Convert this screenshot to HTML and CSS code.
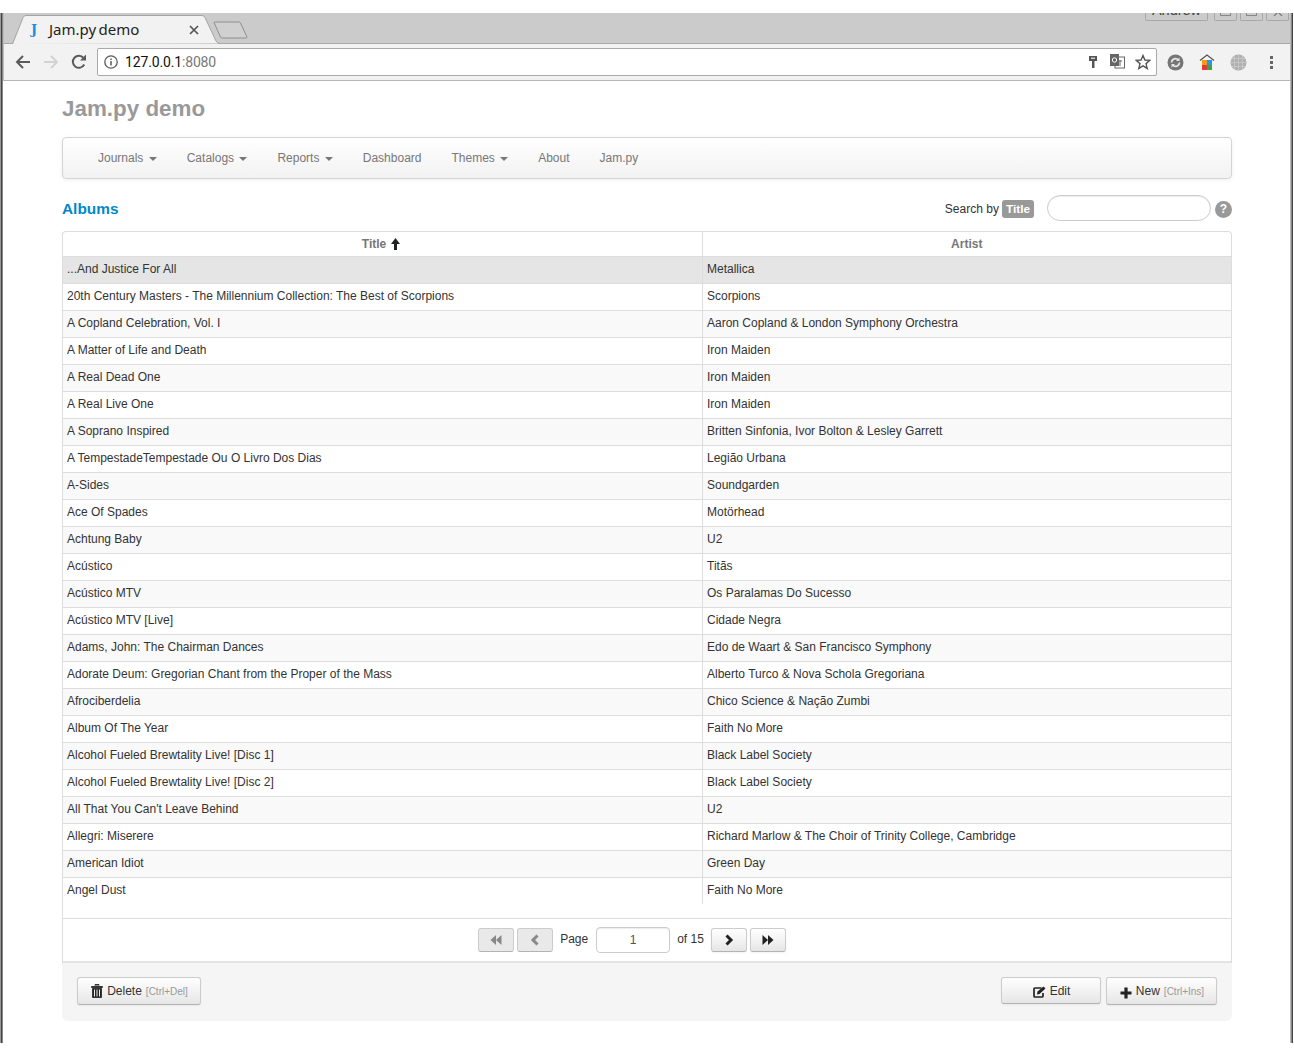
FILE: index.html
```html
<!DOCTYPE html>
<html>
<head>
	<meta charset="utf-8">
	<title>Jam.py demo</title>
	<link rel="stylesheet" href="styles.css">
</head>
<body>
<div class="window">
	<div class="tabstrip">
		<div class="tab">
			<svg class="tab-shape" width="208" height="29" viewBox="0 0 208 29"><path d="M0.5 29 L11 2.5 Q12 0.5 14 0.5 L190 0.5 Q192 0.5 193 2.5 L204 26 Q205 28 208 28.500" fill="#f2f2f2" stroke="#a3a3a3"/></svg>
			<span class="tab-logo">J</span>
			<span class="tab-title">Jam.py demo</span>
			<svg class="tab-close" width="10" height="10" viewBox="0 0 10 10"><path d="M1 1 L9 9 M9 1 L1 9" stroke="#555" stroke-width="1.700"/></svg>
		</div>
		<svg class="newtab" width="35" height="18" viewBox="0 0 35 18"><path d="M1 1.500 Q1 1 2 1 L26 1 Q27 1 27.500 2 L34 16 Q34 17 33 17 L9 17 Q8 17 7.500 16 Z" fill="#d0d0d0" stroke="#8f8f8f"/></svg>
		<div class="winbtns">
			<span class="winbtn user">Andrew</span>
			<span class="winbtn"><i class="win-min"></i></span>
			<span class="winbtn"><i class="win-max"></i></span>
			<span class="winbtn"><svg width="12" height="12" viewBox="0 0 12 12"><path d="M2 4 L10 12 M10 4 L2 12" stroke="#777" stroke-width="1.200"/></svg></span>
		</div>
	</div>
	<div class="toolbar">
		<svg class="tool" width="16" height="16" viewBox="0 0 16 16"><path d="M15 8 H2 M8 2 L2 8 L8 14" fill="none" stroke="#5a5a5a" stroke-width="2"/></svg>
		<svg class="tool" width="16" height="16" viewBox="0 0 16 16"><path d="M1 8 H14 M8 2 L14 8 L8 14" fill="none" stroke="#d2d2d2" stroke-width="2"/></svg>
		<svg class="tool" width="16" height="16" viewBox="0 0 16 16"><path d="M13.200 10.500 A6 6 0 1 1 12.500 4" fill="none" stroke="#5a5a5a" stroke-width="2"/><path d="M9 6.500 H15 V0.500 Z" fill="#5a5a5a"/></svg>
		<div class="urlbar">
			<svg class="info" width="14" height="14" viewBox="0 0 14 14"><circle cx="7" cy="7" r="6.200" fill="none" stroke="#5a5a5a" stroke-width="1.300"/><path d="M7 6 V10.500 M7 3.500 V5" stroke="#5a5a5a" stroke-width="1.500"/></svg>
			<span class="host">127.0.0.1</span><span class="port">:8080</span>
			<svg class="url-ico key" width="8" height="14" viewBox="0 0 8 14"><path d="M0 1 H8 V6 H5.500 V13 H3 V6 H0 Z" fill="#555"/><rect x="2" y="2.500" width="4" height="1.500" fill="#ccc"/></svg>
			<svg class="url-ico trans" width="15" height="15" viewBox="0 0 15 15"><rect x="5" y="3" width="9.500" height="11" fill="#fff" stroke="#666"/><rect x="0" y="0" width="9" height="12" fill="#666"/><circle cx="4.500" cy="6" r="2.200" fill="none" stroke="#fff"/><path d="M8 7 H12 M10 6 V12" stroke="#666"/></svg>
			<svg class="url-ico star" width="16" height="16" viewBox="0 0 16 16"><path d="M8 1.500 L9.900 6 L14.800 6.400 L11 9.600 L12.200 14.400 L8 11.800 L3.800 14.400 L5 9.600 L1.200 6.400 L6.100 6 Z" fill="none" stroke="#555" stroke-width="1.400"/></svg>
		</div>
		<svg class="ext" width="17" height="17" viewBox="0 0 17 17"><circle cx="8.500" cy="8.500" r="8" fill="#757575"/><path d="M4.500 8.500 A4 4 0 0 1 11.500 6 M12.500 8.500 A4 4 0 0 1 5.500 11" fill="none" stroke="#e6e6e6" stroke-width="1.600"/><path d="M12.500 3.500 V7 H9 Z M4.500 13.500 V10 H8 Z" fill="#e6e6e6"/></svg>
		<svg class="ext" width="16" height="17" viewBox="0 0 16 17"><path d="M1 6.500 L8 1 L15 6.500" fill="none" stroke="#555" stroke-width="1.300"/><rect x="3" y="6" width="5" height="5" fill="#f39c12"/><rect x="8" y="6" width="5" height="5" fill="#2196f3"/><rect x="3" y="11" width="5" height="5" fill="#e53935"/><rect x="8" y="11" width="5" height="5" fill="#43a047"/></svg>
		<svg class="ext" width="17" height="17" viewBox="0 0 17 17"><circle cx="8.500" cy="8.500" r="8" fill="#b0b0b0"/><path d="M0.500 8.500 H16.500 M2 4.500 H15 M2 12.500 H15 M8.500 0.500 V16.500 M4.500 2 V15 M12.500 2 V15" stroke="#c6c6c6"/></svg>
		<div class="dots"><i></i><i></i><i></i></div>
	</div>
	<div class="page">
		<div class="container">
			<h1 class="brand">Jam.py demo</h1>
			<ul class="navbar">
				<li>Journals <b class="caret"></b></li>
				<li>Catalogs <b class="caret"></b></li>
				<li>Reports <b class="caret"></b></li>
				<li>Dashboard</li>
				<li>Themes <b class="caret"></b></li>
				<li>About</li>
				<li>Jam.py</li>
			</ul>
			<div class="head-row">
				<h4 class="view-title">Albums</h4>
				<div class="search">
					<span class="search-by">Search by</span>
					<span class="label">Title</span>
					<input class="search-input" type="text">
					<span class="help">?</span>
				</div>
			</div>
			<div class="grid">
				<table>
					<thead>
						<tr>
							<th class="col-title">Title <svg class="sort" width="9" height="12" viewBox="0 0 9 12"><path d="M4.500 0 L9 6 H6 V12 H3 V6 H0 Z" fill="#222"/></svg></th>
							<th>Artist</th>
						</tr>
					</thead>
					<tbody>
						<tr class="selected"><td>...And Justice For All</td><td>Metallica</td></tr>
						<tr><td>20th Century Masters - The Millennium Collection: The Best of Scorpions</td><td>Scorpions</td></tr>
						<tr><td>A Copland Celebration, Vol. I</td><td>Aaron Copland &amp; London Symphony Orchestra</td></tr>
						<tr><td>A Matter of Life and Death</td><td>Iron Maiden</td></tr>
						<tr><td>A Real Dead One</td><td>Iron Maiden</td></tr>
						<tr><td>A Real Live One</td><td>Iron Maiden</td></tr>
						<tr><td>A Soprano Inspired</td><td>Britten Sinfonia, Ivor Bolton &amp; Lesley Garrett</td></tr>
						<tr><td>A TempestadeTempestade Ou O Livro Dos Dias</td><td>Legião Urbana</td></tr>
						<tr><td>A-Sides</td><td>Soundgarden</td></tr>
						<tr><td>Ace Of Spades</td><td>Motörhead</td></tr>
						<tr><td>Achtung Baby</td><td>U2</td></tr>
						<tr><td>Acústico</td><td>Titãs</td></tr>
						<tr><td>Acústico MTV</td><td>Os Paralamas Do Sucesso</td></tr>
						<tr><td>Acústico MTV [Live]</td><td>Cidade Negra</td></tr>
						<tr><td>Adams, John: The Chairman Dances</td><td>Edo de Waart &amp; San Francisco Symphony</td></tr>
						<tr><td>Adorate Deum: Gregorian Chant from the Proper of the Mass</td><td>Alberto Turco &amp; Nova Schola Gregoriana</td></tr>
						<tr><td>Afrociberdelia</td><td>Chico Science &amp; Nação Zumbi</td></tr>
						<tr><td>Album Of The Year</td><td>Faith No More</td></tr>
						<tr><td>Alcohol Fueled Brewtality Live! [Disc 1]</td><td>Black Label Society</td></tr>
						<tr><td>Alcohol Fueled Brewtality Live! [Disc 2]</td><td>Black Label Society</td></tr>
						<tr><td>All That You Can't Leave Behind</td><td>U2</td></tr>
						<tr><td>Allegri: Miserere</td><td>Richard Marlow &amp; The Choir of Trinity College, Cambridge</td></tr>
						<tr><td>American Idiot</td><td>Green Day</td></tr>
						<tr><td>Angel Dust</td><td>Faith No More</td></tr>
					</tbody>
				</table>
				<div class="pager">
					<button class="btn btn-off pg"><svg width="12" height="12" viewBox="0 0 12 12"><path d="M6 1 V11 L0.500 6 Z M11.500 1 V11 L6 6 Z" fill="#888"/></svg></button>
					<button class="btn btn-off pg"><svg width="10" height="12" viewBox="0 0 10 12"><path d="M7.500 1.500 L3 6 L7.500 10.500" fill="none" stroke="#888" stroke-width="3"/></svg></button>
					<span class="pg-text page-word">Page</span>
					<input class="page-input" type="text" value="1">
					<span class="pg-text of-word">of 15</span>
					<button class="btn pg"><svg width="10" height="12" viewBox="0 0 10 12"><path d="M2.500 1.500 L7 6 L2.500 10.500" fill="none" stroke="#222" stroke-width="3"/></svg></button>
					<button class="btn pg"><svg width="12" height="12" viewBox="0 0 12 12"><path d="M0.500 1 V11 L6 6 Z M6 1 V11 L11.500 6 Z" fill="#222"/></svg></button>
				</div>
			</div>
			<div class="form-footer">
				<button class="btn action">
					<svg width="12" height="14" viewBox="0 0 12 14"><path d="M4 1.500 V0.500 H8 V1.500 M0.500 2.500 H11.500 V3.500 H0.500 Z M1.500 4.500 H10.500 V13.500 H1.500 Z" fill="#222" stroke="#222" stroke-width="0.800"/><path d="M3.500 5.500 V12.500 M6 5.500 V12.500 M8.500 5.500 V12.500" stroke="#f0f0f0"/></svg>
					Delete <small>[Ctrl+Del]</small>
				</button>
				<div class="spacer"></div>
				<button class="btn action edit">
					<svg width="13" height="12" viewBox="0 0 13 12"><path d="M8.500 2 H2 Q1 2 1 3 V10 Q1 11 2 11 H9 Q10 11 10 10 V7" fill="none" stroke="#222" stroke-width="1.700"/><path d="M4.500 5.500 L10.500 0.500 L12.500 2.500 L6.500 8 L4 8.500 Z" fill="#222"/></svg>
					Edit
				</button>
				<button class="btn action new">
					<svg width="12" height="12" viewBox="0 0 12 12"><path d="M6 0.500 V11.500 M0.500 6 H11.500" stroke="#222" stroke-width="3.200"/></svg>
					New <small>[Ctrl+Ins]</small>
				</button>
			</div>
		</div>
	</div>
</div>
</body>
</html>
```

FILE: styles.css
```css
*
{
	box-sizing: border-box;
}
html, body
{
	margin: 0;
	padding: 0;
	background: #fff;
}
body
{
	height: 1056px;
	overflow: hidden;
	font-family: "Liberation Sans", Arial, sans-serif;
	font-size: 12px;
	color: #333;
}
.window
{
	margin-top: 13px;
	height: 1030px;
	width: 1293px;
	padding: 0 3px;
	display: flex;
	flex-direction: column;
	overflow: hidden;
	background:
		linear-gradient(90deg, #999 0 1px, #444 1px 2px, #888 2px 3px, transparent 3px),
		linear-gradient(270deg, #444 0 1px, #888 1px 2px, #bbb 2px 3px, transparent 3px);
}

/* browser chrome */
.tabstrip
{
	position: relative;
	z-index: 1;
	height: 30px;
	flex: none;
	background: #cbcbcb;
	display: flex;
	border-left: 1px solid #bdbdbd;
}
.tab
{
	position: relative;
	width: 208px;
	height: 29px;
	margin: 2px 0 0 8px;
	display: flex;
	align-items: center;
	padding: 0 0 0 19px;
}
.tab-shape
{
	position: absolute;
	left: 0;
	top: 0;
}
.tab-logo, .tab-title, .tab-close
{
	position: relative;
}
.tab-logo
{
	font-family: "DejaVu Serif", serif;
	font-weight: bold;
	font-size: 13px;
	color: #1b8fe0;
	width: 18px;
}
.tab-title
{
	font-family: "Noto Sans", Roboto, sans-serif;
	font-size: 15px;
	color: #222;
	width: 140px;
	margin-top: -2px;
	word-spacing: -1.500px;
	white-space: nowrap;
}
.newtab
{
	margin: 8px 0 0 -7px;
}
.winbtns
{
	position: absolute;
	right: 1px;
	top: -13px;
	height: 21px;
	display: flex;
	gap: 3px;
}
.winbtn
{
	width: 23px;
	height: 21px;
	border: 1px solid #a8a8a8;
	border-top: 0;
	border-radius: 0 0 2px 2px;
	display: flex;
	align-items: flex-end;
	justify-content: center;
	padding-bottom: 4px;
	overflow: hidden;
}
.winbtn.user
{
	width: 63px;
	font-size: 14.500px;
	line-height: 15px;
	margin-right: 3px;
	padding-bottom: 2px;
	color: #444;
}
.win-min
{
	display: block;
	width: 11px;
	height: 5px;
	border: 1px solid #888;
	border-top: 0;
}
.win-max
{
	display: block;
	width: 11px;
	height: 6px;
	border: 1px solid #888;
	border-top: 0;
}
.toolbar
{
	height: 38px;
	flex: none;
	background: #f2f2f2;
	border-left: 1px solid #bdbdbd;
	border-top: 1px solid #a9a9a9;
	border-bottom: 1px solid #b5b5b5;
	display: flex;
	align-items: center;
	padding: 0 0 0 11px;
}
.tool
{
	margin-right: 12px;
}
.urlbar
{
	width: 1060px;
	height: 28px;
	margin: 0 10px 1px -2px;
	background: #fff;
	border: 1px solid #a9a9a9;
	border-radius: 2px;
	display: flex;
	align-items: center;
	padding-left: 6px;
	font-family: Roboto, "Noto Sans", sans-serif;
	font-size: 14px;
	letter-spacing: -0.150px;
}
.info
{
	margin-right: 7px;
}
.host
{
	color: #111;
}
.port
{
	color: #777;
}
.key
{
	margin-left: auto;
	margin-right: 13px;
}
.trans
{
	margin-right: 10px;
}
.star
{
	margin-right: 5px;
}
.ext
{
	margin-right: 15px;
}
.dots
{
	margin-left: 8px;
	display: flex;
	flex-direction: column;
	gap: 2px;
}
.dots i
{
	display: block;
	width: 3px;
	height: 3px;
	background: #666;
}

/* page */
.page
{
	flex: 1;
	background: #fff;
	padding-left: 59px;
}
.container
{
	width: 1170px;
}
.brand
{
	margin: 0;
	height: 56px;
	padding-top: 14px;
	font-size: 22.400px;
	line-height: 28px;
	font-weight: bold;
	color: #999;
}
.navbar
{
	margin: 0;
	height: 42px;
	list-style: none;
	display: flex;
	align-items: center;
	padding: 0 0 0 20px;
	background: linear-gradient(#fff, #f2f2f2);
	border: 1px solid #d4d4d4;
	border-radius: 4px;
	box-shadow: 0 1px 4px rgba(0, 0, 0, 0.065);
}
.navbar li
{
	padding: 0 15px;
	color: #777;
}
.caret
{
	display: inline-block;
	width: 0;
	height: 0;
	margin-left: 2px;
	vertical-align: middle;
	border-top: 4px solid #777;
	border-left: 4px solid transparent;
	border-right: 4px solid transparent;
}
.head-row
{
	height: 52px;
	padding-top: 6px;
	display: flex;
	align-items: center;
	justify-content: space-between;
}
.view-title
{
	margin: 2px 0 0;
	font-size: 15.400px;
	font-weight: bold;
	color: #0088cc;
}
.search
{
	display: flex;
	align-items: center;
}
.search-by
{
	margin-top: 2px;
}
.label
{
	margin: 2px 0 0 3px;
	padding: 0 4px;
	height: 18px;
	line-height: 18px;
	background: #999;
	color: #fff;
	font-weight: bold;
	border-radius: 3px;
	font-size: 11.844px;
}
.search-input
{
	width: 164px;
	height: 26px;
	margin-left: 13px;
	border: 1px solid #ccc;
	border-radius: 14px;
	box-shadow: inset 0 1px 1px rgba(0, 0, 0, 0.075);
	background: #fff;
}
.help
{
	width: 17px;
	height: 17px;
	margin: 2px 0 0 4px;
	border-radius: 50%;
	background: #999;
	color: #fff;
	font-weight: bold;
	text-align: center;
	line-height: 17px;
}
.grid
{
	border: 1px solid #ddd;
	border-bottom: 0;
	border-radius: 4px 4px 0 0;
	height: 732px;
	display: flex;
	flex-direction: column;
}
table
{
	width: 1168px;
	border-collapse: collapse;
	table-layout: fixed;
	flex: none;
}
th
{
	height: 24px;
	padding: 0;
	color: #777;
	font-size: 12px;
	border-bottom: 1px solid #ddd;
	vertical-align: middle;
}
.col-title
{
	width: 639px;
	border-right: 1px solid #ddd;
	padding-right: 3px;
}
.sort
{
	margin-left: 1px;
	vertical-align: -2px;
}
td
{
	height: 27px;
	padding: 0 4px 1px;
	border-bottom: 1px solid #ddd;
	vertical-align: middle;
	white-space: nowrap;
	overflow: hidden;
}
td:first-child
{
	border-right: 1px solid #ddd;
}
td + td
{
	padding-left: 4.500px;
}
tbody tr:nth-child(odd) td
{
	background: #f9f9f9;
}
tbody tr:last-child td
{
	border-bottom: 0;
	background: #fff;
}
tbody tr.selected td
{
	background: #e5e5e5;
}
.pager
{
	margin-top: 14px;
	height: 45px;
	border-top: 1px solid #ddd;
	border-bottom: 2px solid #e3e3e3;
	display: flex;
	align-items: center;
	justify-content: center;
	padding-right: 33px;
}
.btn
{
	font-family: inherit;
	font-size: 12px;
	color: #333;
	border: 1px solid #ccc;
	border-bottom-color: #b3b3b3;
	border-radius: 3px;
	background: linear-gradient(#fff, #e6e6e6);
	box-shadow: inset 0 1px 0 rgba(255, 255, 255, 0.2), 0 1px 2px rgba(0, 0, 0, 0.05);
	padding: 0;
	display: inline-flex;
	align-items: center;
	justify-content: center;
}
.pg
{
	width: 36px;
	height: 24px;
	margin-left: 3px;
}
.btn-off
{
	background: #e9e9e9;
	box-shadow: none;
}
.pg-text
{
	white-space: nowrap;
	margin-top: -2px;
}
.page-word
{
	margin-left: 7px;
}
.of-word
{
	margin-right: 4px;
}
.page-input
{
	width: 74px;
	height: 26px;
	margin: 0 7px 0 8px;
	text-align: center;
	border: 1px solid #ccc;
	border-radius: 4px;
	font-family: inherit;
	font-size: 12px;
	color: #555;
	box-shadow: inset 0 1px 1px rgba(0, 0, 0, 0.075);
}
.form-footer
{
	height: 58px;
	background: #f5f5f5;
	border-radius: 0 0 6px 6px;
	display: flex;
	align-items: flex-start;
	padding: 14px 15px 0;
}
.spacer
{
	flex: 1;
}
.action
{
	height: 28px;
	gap: 4px;
	width: 124px;
	padding-left: 1px;
}
.action small
{
	font-size: 10px;
	color: #999;
}
.edit
{
	width: 100px;
	height: 27px;
	margin-right: 5px;
}
.edit svg
{
	margin-top: 2px;
}
.new
{
	width: 111px;
}
.new svg
{
	margin-top: 3px;
}
```
